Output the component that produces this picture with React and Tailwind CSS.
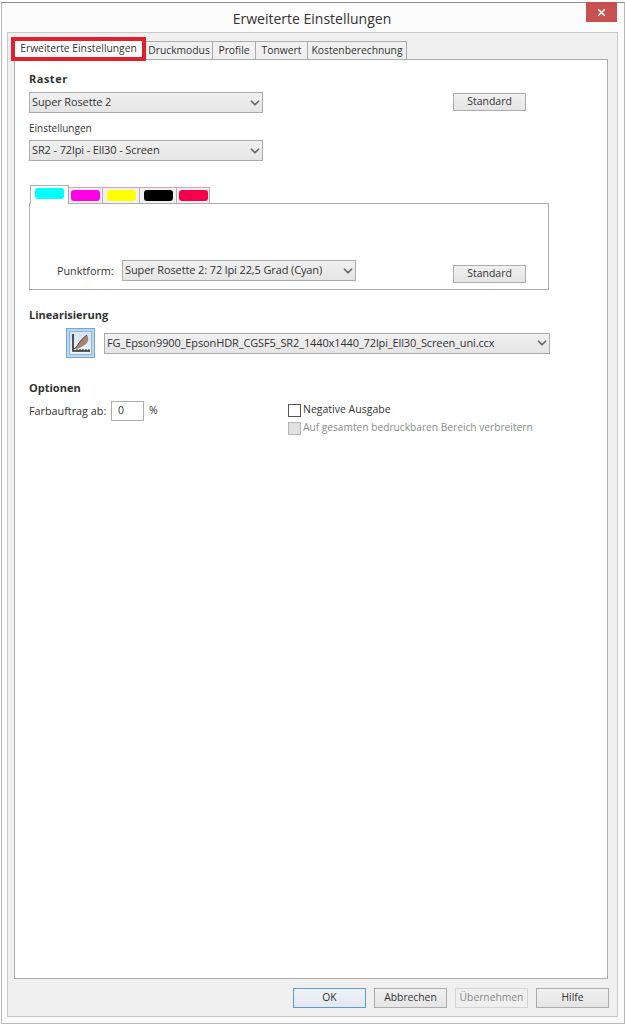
import { ChevronDown, X } from 'lucide-react'

const font = "font-['Open_Sans','Noto_Sans',sans-serif]"

function Select({ value, className }) {
  return (
    <div className={`flex h-[21px] items-center justify-between border border-[#acacac] bg-gradient-to-b from-[#f0f0f0] to-[#e5e5e5] pl-[2px] text-[11px] tracking-[-0.12px] text-[#333] ${className}`}>
      <span className="whitespace-nowrap">{value}</span>
      <ChevronDown size={14} strokeWidth={3} className="text-[#666]" />
    </div>
  )
}

function Button({ label, className = '' }) {
  return (
    <div className={`flex h-[18px] w-[73px] items-center justify-center border border-[#acacac] bg-gradient-to-b from-[#f0f0f0] to-[#e5e5e5] text-[10.5px] text-[#333] ${className}`}>
      {label}
    </div>
  )
}

function FooterButton({ label, border = 'border-[#acacac]', text = 'text-[#333]', bg = 'from-[#f0f0f0] to-[#e5e5e5]' }) {
  return (
    <div className={`flex h-[20px] w-[73px] items-center justify-center border bg-gradient-to-b text-[10.3px] ${border} ${text} ${bg}`}>
      {label}
    </div>
  )
}

const TABS = [
  { label: 'Druckmodus', w: 'w-[67px]' },
  { label: 'Profile', w: 'w-[43px]' },
  { label: 'Tonwert', w: 'w-[52px]' },
  { label: 'Kostenberechnung', w: 'w-[99px]' },
]

const INKS = [
  { c: 'bg-[#ff00e6]', w: 'w-[34px]' },
  { c: 'bg-[#ffff00]', w: 'w-[37px]' },
  { c: 'bg-black', w: 'w-[37px]' },
  { c: 'bg-[#f5004b]', w: 'w-[33px]' },
]

export default function App() {
  return (
    <div className={`h-[1026px] w-[625px] overflow-hidden bg-white pt-[2px] pl-[1px] ${font}`}>
      <div className="h-[1022px] w-[624px] border border-[#b8b8b8] border-t-[#8c8c8c] bg-[#fbfbfb]">

        {/* Title bar */}
        <div className="relative flex h-[29px] items-center justify-center pt-[1px] pr-[2px] text-[14px] text-[#333]">
          Erweiterte Einstellungen
          <div className="absolute right-[7px] top-[-1px] flex h-[20px] w-[31px] items-center justify-center bg-[#c75050]">
            <X size={11} strokeWidth={3.5} className="text-white" />
          </div>
        </div>

        <div className="ml-[5px] h-[985px] w-[611px] border border-[#c8c8c8] bg-[#f0f0f0]">

          {/* Tabs */}
          <div className="mt-[8px] flex h-[18px] items-end pl-[3px] text-[10.3px] text-[#333]">
            <div className="relative z-10 mb-[-2px] flex h-[24px] w-[135px] items-center justify-center border-[4px] border-[#e0202e] bg-white">
              Erweiterte Einstellungen
            </div>
            {TABS.map(t => (
              <div key={t.label} className={`flex h-[18px] items-center justify-center border border-b-0 border-l-0 border-[#acacac] bg-[#f0f0f0] pt-[1px] ${t.w}`}>
                {t.label}
              </div>
            ))}
          </div>

          {/* Panel */}
          <div className="ml-[6px] flex h-[920px] w-[594px] flex-col border border-[#acacac] bg-white pl-[14px] text-[10.5px] text-[#333]">
            <div className="mt-[12px] text-[11px] font-bold leading-[14px] tracking-[0.5px]">Raster</div>
            <div className="mt-[6px] flex items-start">
              <Select value="Super Rosette 2" className="w-[234px]" />
              <Button label="Standard" className="ml-[190px] mt-[1px]" />
            </div>
            <div className="mt-[8px] text-[10px] leading-[14px]">Einstellungen</div>
            <Select value="SR2 - 72lpi - Ell30 - Screen" className="mt-[5px] w-[234px]" />

            {/* Ink tabs */}
            <div className="mt-[24px] flex h-[18px] items-end pl-[1px]">
              <div className="relative z-10 mb-[-1px] flex h-[19px] w-[39px] justify-center border border-b-0 border-[#acacac] bg-white pt-[2px]">
                <div className="h-[11px] w-[29px] rounded-[3px] bg-[#00ffff]" />
              </div>
              {INKS.map(ink => (
                <div key={ink.c} className={`flex h-[16px] items-center justify-center border border-b-0 border-l-0 border-[#c8a8b8] bg-[#f0f0f0] ${ink.w}`}>
                  <div className={`h-[11px] w-[29px] rounded-[3px] ${ink.c}`} />
                </div>
              ))}
            </div>
            <div className="flex h-[87px] w-[520px] items-start border border-[#acacac] pt-[56px]">
              <span className="ml-[27px] mt-[3px] w-[65px] text-[10.8px]">Punktform:</span>
              <Select value="Super Rosette 2: 72 lpi 22,5 Grad (Cyan)" className="w-[234px]" />
              <Button label="Standard" className="ml-[97px] mt-[5px]" />
            </div>

            <div className="mt-[18px] text-[11px] font-bold leading-[14px]">Linearisierung</div>
            <div className="mt-[6px] flex items-center pl-[37px]">
              <div className="flex h-[30px] w-[29px] items-center justify-center border border-[#6fa8d8] bg-[#bcd8f0]">
                <div className="flex h-[24px] w-[23px] items-center justify-center border border-[#8fb4d4] bg-gradient-to-b from-[#d4e4f2] to-[#eef3f8]">
                  <svg width="21" height="22" viewBox="0 0 21 22" fill="none">
                    <path d="M3 2V19H20" stroke="#2a2a2a" strokeWidth="1.6" />
                    <path d="M4 17C8 15 9 7 17 3C20 8 17 12 13 14C10 16 8 17 5 17Z" fill="#a58676" />
                    <path d="M4 17C8 14 10 8 17 3" stroke="#5a3a30" strokeWidth="1" />
                    <path d="M7 19V17M10 19V17M13 19V17M16 19V17M19 19V17" stroke="#2a2a2a" />
                  </svg>
                </div>
              </div>
              <Select value="FG_Epson9900_EpsonHDR_CGSF5_SR2_1440x1440_72lpi_Ell30_Screen_uni.ccx" className="ml-[9px] w-[446px]" />
            </div>

            <div className="mt-[23px] text-[11px] font-bold leading-[14px]">Optionen</div>
            <div className="mt-[6px] flex items-start">
              <span className="mt-[2px] w-[82px] text-[10.8px]">Farbauftrag ab:</span>
              <div className="flex h-[20px] w-[33px] items-center border border-[#acacac] pl-[6px]">0</div>
              <span className="ml-[5px] mt-[2px] w-[139px]">%</span>
              <div className="mt-[2px] flex flex-col">
                <div className="flex h-[14px] items-center">
                  <div className="h-[13px] w-[13px] border border-[#555]" />
                  <span className="ml-[2px]">Negative Ausgabe</span>
                </div>
                <div className="mt-[4px] flex h-[14px] items-center text-[#8a8a8a]">
                  <div className="h-[13px] w-[13px] border border-[#b5b5b5] bg-[#e0e0e0]" />
                  <span className="ml-[2px] text-[10.2px]">Auf gesamten bedruckbaren Bereich verbreitern</span>
                </div>
              </div>
            </div>
          </div>

          {/* Footer buttons */}
          <div className="mt-[9px] flex justify-end gap-[8px] pr-[8px]">
            <FooterButton label="OK" border="border-[#5b9bd0]" bg="from-[#eef3f8] to-[#e2e8ee]" />
            <FooterButton label="Abbrechen" />
            <FooterButton label="Übernehmen" border="border-[#d4d4d4]" text="text-[#8a8a8a]" bg="from-[#efefef] to-[#efefef]" />
            <FooterButton label="Hilfe" />
          </div>
        </div>
      </div>
    </div>
  )
}
